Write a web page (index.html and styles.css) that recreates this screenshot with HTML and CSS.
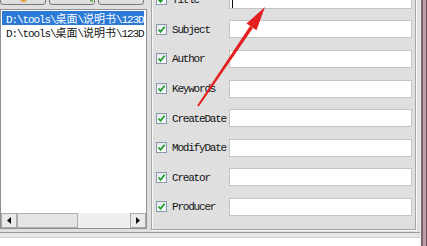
FILE: index.html
```html
<!DOCTYPE html>
<html lang="en">
	<head>
		<meta charset="UTF-8">
		<title>PDF Info</title>
		<link rel="stylesheet" href="styles.css">
	</head>
	<body>
		<div class="window">
			<div class="main">
				<div class="content">
					<div class="left">
						<div class="tools">
							<span class="tbtn"><span class="tico tico-open"></span></span>
							<span class="tbtn"><span class="tico tico-go"></span></span>
							<span class="tbtn"></span>
						</div>
						<div class="list">
							<div class="items">
								<div class="item sel">D:\tools\<span class="cjk">桌面</span>\<span class="cjk">说明书</span>\123D.pdf</div>
								<div class="item">D:\tools\<span class="cjk">桌面</span>\<span class="cjk">说明书</span>\123D.pdf</div>
							</div>
							<div class="hscroll">
								<span class="sb-btn">
									<svg width="4" height="7" viewBox="0 0 4 7"><path d="M4 0 L0 3.5 L4 7 Z" fill="#111"/></svg>
								</span>
								<span class="sb-thumb"></span>
								<span class="sb-track"></span>
								<span class="sb-btn">
									<svg width="4" height="7" viewBox="0 0 4 7"><path d="M0 0 L4 3.5 L0 7 Z" fill="#111"/></svg>
								</span>
							</div>
						</div>
					</div>

					<div class="group">
						<div class="field">
							<span class="check"><svg width="9" height="9" viewBox="0 0 9 9"><path d="M1.5 4.5 L3.5 6.8 L7.6 1.8" fill="none" stroke="#1e9e2c" stroke-width="1.8"/></svg></span>
							<span class="label">Title</span>
							<span class="input"><span class="caret"></span></span>
						</div>
						<div class="field">
							<span class="check"><svg width="9" height="9" viewBox="0 0 9 9"><path d="M1.5 4.5 L3.5 6.8 L7.6 1.8" fill="none" stroke="#1e9e2c" stroke-width="1.8"/></svg></span>
							<span class="label">Subject</span>
							<span class="input"></span>
						</div>
						<div class="field">
							<span class="check"><svg width="9" height="9" viewBox="0 0 9 9"><path d="M1.5 4.5 L3.5 6.8 L7.6 1.8" fill="none" stroke="#1e9e2c" stroke-width="1.8"/></svg></span>
							<span class="label">Author</span>
							<span class="input"></span>
						</div>
						<div class="field">
							<span class="check"><svg width="9" height="9" viewBox="0 0 9 9"><path d="M1.5 4.5 L3.5 6.8 L7.6 1.8" fill="none" stroke="#1e9e2c" stroke-width="1.8"/></svg></span>
							<span class="label">Keywords</span>
							<span class="input"></span>
						</div>
						<div class="field">
							<span class="check"><svg width="9" height="9" viewBox="0 0 9 9"><path d="M1.5 4.5 L3.5 6.8 L7.6 1.8" fill="none" stroke="#1e9e2c" stroke-width="1.8"/></svg></span>
							<span class="label">CreateDate</span>
							<span class="input"></span>
						</div>
						<div class="field">
							<span class="check"><svg width="9" height="9" viewBox="0 0 9 9"><path d="M1.5 4.5 L3.5 6.8 L7.6 1.8" fill="none" stroke="#1e9e2c" stroke-width="1.8"/></svg></span>
							<span class="label">ModifyDate</span>
							<span class="input"></span>
						</div>
						<div class="field">
							<span class="check"><svg width="9" height="9" viewBox="0 0 9 9"><path d="M1.5 4.5 L3.5 6.8 L7.6 1.8" fill="none" stroke="#1e9e2c" stroke-width="1.8"/></svg></span>
							<span class="label">Creator</span>
							<span class="input"></span>
						</div>
						<div class="field">
							<span class="check"><svg width="9" height="9" viewBox="0 0 9 9"><path d="M1.5 4.5 L3.5 6.8 L7.6 1.8" fill="none" stroke="#1e9e2c" stroke-width="1.8"/></svg></span>
							<span class="label">Producer</span>
							<span class="input"></span>
						</div>
					</div>
				</div>
				<div class="statusbar"></div>
				<div class="below"></div>
			</div>
			<div class="frame"></div>

			<!-- red annotation arrow drawn over the screenshot -->
			<svg class="arrow" width="427" height="246" viewBox="0 0 427 246">
				<polygon points="198.8,106.6 197.2,105.4 250,25.9 253,27.9" fill="#e41f1f"/>
				<polygon points="265,7 246.5,23.5 256.5,30.3" fill="#e41f1f"/>
			</svg>
		</div>
	</body>
</html>
```

FILE: styles.css
```css
* {
    margin: 0;
    padding: 0;
    box-sizing: border-box;
}

body {
    width: 427px;
    height: 246px;
    overflow: hidden;
    background: #dfdfdf;
    font-family: 'Liberation Mono', 'Noto Sans CJK SC', monospace;
    color: #141414;
}

.window {
    position: relative;
    width: 427px;
    height: 246px;
    display: flex;
}

.main {
    width: 421px;
    display: flex;
    flex-direction: column;
}

.content {
    height: 231px;
    display: flex;
    gap: 4px;
    overflow: hidden;
}

/* left column */
.left {
    width: 147px;
    display: flex;
    flex-direction: column;
}

.tools {
    display: flex;
    gap: 3px;
    margin-top: -18px;
    height: 23px;
    flex-shrink: 0;
}

.tbtn {
    width: 46px;
    height: 23px;
    border: 1px solid #7a7a7a;
    border-radius: 3px;
    background: linear-gradient(#f2f2f2, #dcdcdc);
    position: relative;
}

.tico {
    position: absolute;
    bottom: 2px;
    width: 7px;
    height: 4px;
    border-radius: 0 0 3px 3px;
}

.tico-open {
    left: 19px;
    background: #e8a040;
}

.tico-go {
    right: 1px;
    width: 3px;
    background: #6cb84a;
}

.list {
    margin-top: 4px;
    height: 220px;
    border: 1px solid #8e9097;
    background: #fff;
    display: flex;
    flex-direction: column;
}

.items {
    flex: 1;
    padding: 1px 1px 0 1px;
    overflow: hidden;
}

.item {
    height: 14px;
    line-height: 15px;
    padding-left: 4px;
    font-size: 11px;
    letter-spacing: -1.1px;
    white-space: nowrap;
    overflow: hidden;
    color: #141414;
}

.item .cjk {
    font-family: 'Noto Sans CJK SC', sans-serif;
    font-size: 11px;
    letter-spacing: 0;
}

.item.sel {
    background: #2b7bd6;
    color: #fff;
    margin-right: 1px;
}

.hscroll {
    height: 15px;
    display: flex;
    background: #efefef;
    flex-shrink: 0;
}

.sb-btn {
    width: 16px;
    border: 1px solid #a8a8a8;
    background: #eaeaea;
    display: flex;
    align-items: center;
    justify-content: center;
}

.sb-thumb {
    width: 61px;
    border: 1px solid #b0b0b0;
    background: #e4e4e4;
}

.sb-track {
    flex: 1;
}

/* right group */
.group {
    width: 265px;
    margin-top: -30px;
    height: 260px;
    border: 1px solid #a6a6a6;
    box-shadow: inset 1px 1px 0 #f7f7f7, 1px 1px 0 #f7f7f7;
    padding: 14px 3px 0 4px;
    display: grid;
    grid-auto-rows: 29.6px;
    align-content: start;
}

.field {
    display: flex;
    align-items: center;
}

.check {
    width: 11px;
    height: 11px;
    border: 1px solid #8a98ad;
    background: linear-gradient(#e6e9ee, #fbfbfb);
    display: flex;
    align-items: center;
    justify-content: center;
    flex-shrink: 0;
}

.label {
    width: 57px;
    margin-left: 5px;
    padding-top: 1px;
    font-size: 11px;
    letter-spacing: -1.2px;
    white-space: nowrap;
    color: #141414;
}

.input {
    width: 183px;
    height: 18px;
    background: #fff;
    border: 1px solid #c4c4c4;
    position: relative;
}

.caret {
    position: absolute;
    left: 2px;
    top: 3px;
    width: 1px;
    height: 13px;
    background: #111;
}

/* bottom strip */
.statusbar {
    margin-top: 1px;
    height: 5px;
    border-top: 1px solid #9a9a9a;
    background: #e6e6e6;
    flex-shrink: 0;
}

.below {
    flex: 1;
    background: #fff;
    border-top: 1px solid #cfcfcf;
}

.frame {
    width: 6px;
    background: #b99ca4;
    border-left: 2px solid #7a6870;
    border-right: 1px solid #6a565c;
    box-shadow: -1px 0 0 #ececec;
}

.arrow {
    position: absolute;
    left: 0;
    top: 0;
    pointer-events: none;
}
```
